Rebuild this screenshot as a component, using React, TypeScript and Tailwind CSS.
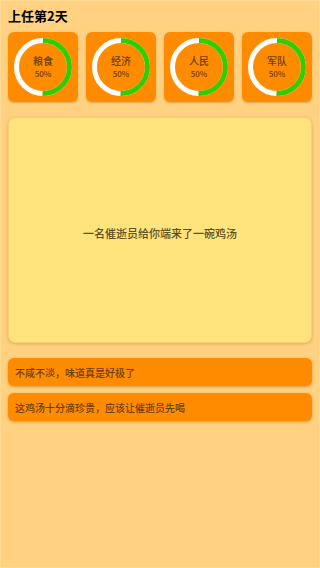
const stats = [
  { name: '粮食', value: 50 },
  { name: '经济', value: 50 },
  { name: '人民', value: 50 },
  { name: '军队', value: 50 },
]

const options = ['不咸不淡，味道真是好极了', '这鸡汤十分滴珍贵，应该让催逝员先喝']

function Ring({ name, value }: { name: string; value: number }) {
  const r = 26.5
  const c = 2 * Math.PI * r
  return (
    <div className="relative w-[58px] h-[58px]">
      <svg width="58" height="58" viewBox="0 0 58 58" className="absolute inset-0">
        <circle cx="29" cy="29" r={r} fill="none" stroke="#ffffff" strokeWidth="5" />
        <circle
          cx="29"
          cy="29"
          r={r}
          fill="none"
          stroke="#33cc00"
          strokeWidth="5"
          strokeDasharray={`${(c * value) / 100} ${c}`}
          transform="rotate(-90 29 29)"
        />
      </svg>
      <div className="absolute inset-0 flex flex-col items-center justify-center text-[#6e3c00] font-medium">
        <div className="text-[10px] leading-[12px]">{name}</div>
        <div className="text-[8px] leading-[10px] mt-[2px]">{value}%</div>
      </div>
    </div>
  )
}

export default function App() {
  return (
    <main
      className="min-h-[568px] bg-[#ffd180] border border-[#ffda90] px-[7px] pt-[7px] pb-4"
      style={{ fontFamily: '"Noto Sans CJK SC", "Noto Sans", sans-serif' }}
    >
      {/* Title */}
      <div className="text-[13px] leading-[16px] font-bold text-black">上任第2天</div>

      {/* Stat cards */}
      <div className="mt-2 grid grid-cols-4 gap-2">
        {stats.map((s) => (
          <div
            key={s.name}
            className="h-[70px] rounded-[6px] bg-[#ff8c00] shadow-[0_1px_2px_rgba(160,90,0,0.35)] flex items-center justify-center"
          >
            <Ring name={s.name} value={s.value} />
          </div>
        ))}
      </div>

      {/* Event panel */}
      <div className="mt-[15px] h-[226px] rounded-[7px] bg-[#ffe37c] border border-[#f5d070] shadow-[0_1px_3px_rgba(160,110,0,0.35)] flex items-center justify-center">
        <div className="mt-[6px] text-[11px] font-medium text-[#5e4f22]">一名催逝员给你端来了一碗鸡汤</div>
      </div>

      {/* Options */}
      <div className="mt-[15px] flex flex-col gap-[7px]">
        {options.map((o) => (
          <button
            key={o}
            className="h-[28px] w-full rounded-[6px] bg-[#ff8c00] shadow-[0_1px_3px_rgba(150,80,0,0.45)] px-[7px] text-left text-[10px] font-medium text-[#6e3c00]"
          >
            {o}
          </button>
        ))}
      </div>
    </main>
  )
}
